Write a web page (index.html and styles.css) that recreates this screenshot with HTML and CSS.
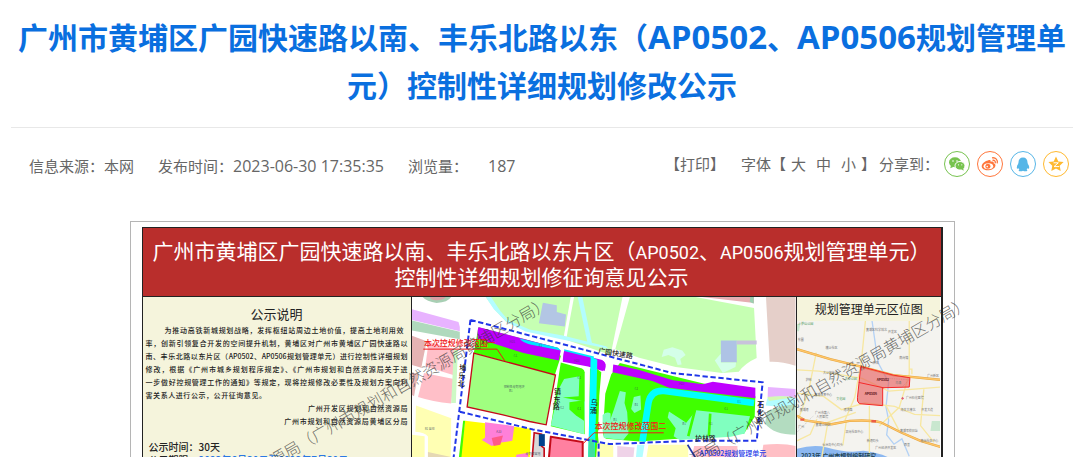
FILE: index.html
```html
<!DOCTYPE html>
<html lang="zh-CN">
<head>
<meta charset="utf-8">
<title>控制性详细规划修改公示</title>
<link rel="stylesheet" href="styles.css">
</head>
<body>
<main class="article">
  <h1 class="title">广州市黄埔区广园快速路以南、丰乐北路以东（<span class="title-code">AP0502</span>、<span class="title-code">AP0506</span>规划管理单元）控制性详细规划修改公示</h1>
  <div class="meta">
    <div class="meta-info">
      <span>信息来源：本网</span>
      <span>发布时间：<time class="num">2023-06-30 17:35:35</time></span>
      <span class="views"><span>浏览量：</span><span class="num">187</span></span>
    </div>
    <div class="tools">
      <button class="tool" type="button">【打印】</button>
      <div class="sizes">
        <span>字体【</span>
        <span class="size-list"><button class="tool" type="button">大</button><button class="tool" type="button">中</button><button class="tool" type="button">小</button></span>
        <span>】</span>
      </div>
      <div class="share">
        <span>分享到：</span>
        <div class="share-list">
          <a class="share-link wechat" href="#" aria-label="微信"><svg viewBox="1 1 24 24"><ellipse cx="11" cy="11.3" rx="6" ry="5"/><path d="M7 14l-.7 3.200 3.400-1.500z"/><ellipse class="halo" cx="16" cy="14.800" rx="5" ry="4.300"/><path d="M17 18l2.600 1.800-.4-3z"/><g class="dots"><circle cx="9" cy="10" r=".8"/><circle cx="13" cy="10" r=".8"/><circle cx="14.500" cy="13.800" r=".6"/><circle cx="17.800" cy="13.800" r=".6"/></g></svg></a>
          <a class="share-link weibo" href="#" aria-label="微博"><svg viewBox="1 1 24 24"><path d="M11 9.500c1.500-.9 3-.6 2.600 1.300 2.300-.8 3.600 0 3 1.500 1.700.6 2.200 1.800 1.700 3-.9 2.500-4.300 4-7.600 4-3.300 0-6-1.600-6-4 0-2.200 3-5.400 6.300-5.800z"/><ellipse class="dots" cx="11.400" cy="15.200" rx="4.800" ry="3"/><circle cx="10.900" cy="15.300" r="2.500"/><circle class="dots" cx="10.200" cy="15.600" r=".8"/><path class="wave" d="M15.500 9.300c2-.4 3.300 1 2.700 2.900M15 6.900c3.600-.7 6.200 2 5.200 5.500"/></svg></a>
          <a class="share-link qq" href="#" aria-label="QQ"><svg viewBox="1 1 24 24"><path d="M13 6.500c3 0 4.600 2 4.500 5 .2.600.4 1 .3 1.500 1.200 1.400 1.700 3.200 1.200 4.700-.4.300-.9-.1-1.300-.7-.2.700-.6 1.300-1.100 1.700 1 .5 1.200 1.300-.2 1.500-1.400.1-2.600 0-3.400-.5-.8.500-2 .6-3.400.5-1.400-.2-1.200-1-.2-1.500-.5-.4-.9-1-1.100-1.700-.4.600-.9 1-1.300.7-.5-1.500 0-3.300 1.200-4.700-.1-.5.100-.9.300-1.500-.1-3 1.500-5 4.500-5z"/></svg></a>
          <a class="share-link qzone" href="#" aria-label="QQ空间"><svg viewBox="1 1 24 24"><path d="M13 5.500l2.300 4.900 5.300.7-3.900 3.700 1 5.300-4.700-2.600-4.700 2.600 1-5.300-3.900-3.700 5.300-.7z"/><path class="zed" d="M10.500 11.800h4.800l-4.300 3.800h5.200"/></svg></a>
        </div>
      </div>
    </div>
  </div>

  <section class="poster">
    <div class="sheet">
      <h2 class="banner">广州市黄埔区广园快速路以南、丰乐北路以东片区（<span class="code">AP0502</span>、<span class="code">AP0506</span>规划管理单元）<br>控制性详细规划修征询意见公示</h2>
      <div class="columns">
        <div class="notice">
          <h3 class="notice-title">公示说明</h3>
          <div class="notice-text">
            <p class="first">为推动高铁新城规划战略，发挥枢纽站周边土地价值，提高土地利用效</p>
            <p>率，创新引领复合开发的空间提升机制，黄埔区对广州市黄埔区广园快速路以</p>
            <p>南、丰乐北路以东片区（AP0502、AP0506规划管理单元）进行控制性详细规划</p>
            <p>修改，根据《广州市城乡规划程序规定》、《广州市规划和自然资源局关于进</p>
            <p>一步做好控规管理工作的通知》等规定，现将控规修改必要性及规划方案向利</p>
            <p class="last">害关系人进行公示，公开征询意见。</p>
          </div>
          <div class="sign">
            <p class="sign-a">广州开发区规划和自然资源局</p>
            <p class="sign-b">广州市规划和自然资源局黄埔区分局</p>
          </div>
          <p class="period">公示时间：30天</p>
          <p class="period">公示期限：<span class="dates">2023年6月30日至2023年7月30日</span></p>
        </div>

        <svg class="plan" viewBox="6 21 1155 510" role="img" aria-label="规划图">
          <rect x="6" y="21" width="1155" height="510" fill="#fff"/>
          <!-- surrounding plots -->
          <path d="M38 21h86q-10 16-44 18-30-4-42-18z" fill="#a8cfb4"/><path d="M60 21h48q-10 10-28 10t-20-10z" fill="#d9a0a4"/>
          <path d="M228 21H484L462 146 360 126 290 96 256 60z" fill="#c6ffb3"/>
          <path d="M494 21H640L604 196 470 150z" fill="#c6ffb3"/>
          <path d="M662 21H860L1036 54 1044 205Q1010 220 990 246L940 250 800 232 690 204 618 178z" fill="#c6ffb3"/>
          <path d="M228 21h16l28 42 24 28 64 28 100 18 130 32 8 8-140-28-110-24-56-28-40-40z" fill="#b3fdff"/>
          <path d="M505 21h14l30 144-14-4z" fill="#b3fdff"/>
          <path d="M400 38l42 8v20l28 8-4 36-78-10z" fill="#b3c6e4"/>
          <path d="M880 21h156v18z" fill="#e5adb1"/><path d="M1025 21h10v20l-12-6z" fill="#9bcfb0"/>
          <path d="M1072 21h89V228q-44-14-78-12z" fill="#e5cfc9"/>
          <path d="M936 152h48v66h-48z" fill="#aec3e5"/><path d="M984 152h60v12h-60z" fill="#c8c3db"/>
          <path d="M936 192v26h46l-2 14-38 18-24-38z" fill="#d4ffe9"/>
          <path d="M764 180l26-8 30 10 10 14-16 12 4 16-12 2-8-22-20-8-20 6z" fill="#d4ffe9"/>
          <path d="M6 58l140 38q6 16 4 28L6 90z" fill="#e8b3ff"/><path d="M6 92l144 34v22L6 122z" fill="#b0d9bd"/>
          <path d="M6 138l44 16-16 80-28-8z" fill="#e5b3b3"/><path d="M56 156l78 22-4 78-84-26z" fill="#ffbfc8"/>
          <path d="M6 248l18 6-12 66-6-4z" fill="#e5b3b3"/><path d="M42 250l90 18-8 74q-56-6-100-20z" fill="#ffbfc8"/><path d="M132 180h12l-6 160h-14z" fill="#cdf9c4"/>
          <path d="M18 348l106 38-2 145H54v-90q-10-12-38-14z" fill="#ffffb3"/><path d="M6 436l38 4v91H6z" fill="#ffffb3"/><path d="M54 488l66 14v29H54z" fill="#e5d8b3"/>
          <path d="M1078 292l83 6v30l-84-6z" fill="#e8b3ff"/><path d="M1076 326q44-12 85 0v30l-90-8z" fill="#b3fdff"/><path d="M1076 322q40-4 85 0l-80 12z" fill="#d5f9b3"/>
          <path d="M1076 364q40-16 85-20v92q-66 0-92-34z" fill="#b3dcc0"/><path d="M1064 466q60-6 97 4v61h-107z" fill="#ffbfc5"/>
          <!-- railway belt and green land -->
          <path d="M206 112L444 174 454 200 436 256 192 190z" fill="#40ff00"/>
          <path d="M208 112l236 62 10 8-6 30-106-22-138-44q-2-24 2-34z" fill="#bf00ff"/>
          <path d="M330 146l116 28 8 8-92-18q-24-6-32-18z" fill="#00e5ff"/>
          <path d="M464 182l112 28q14 6 12 20l-8 14-44-14-76-14z" fill="#bf00ff"/>
          <path d="M464 178l90 22-6 28-10-10-72-26z" fill="#00e5ff"/><path d="M464 184l82 20-2 22-84-16z" fill="#bf00ff"/>
          <path d="M454 218l64 18q8 4 8 12V434l-102-24z" fill="#40ff00"/>
          <path d="M464 268l46-8-2 60-48 4 66 12-2 98-100-26 24-110z" fill="#80ffbf"/><path d="M480 338l44-6v62l-24-16-20-18z" fill="#40ff00"/>
          <path d="M542 236l22 2 12 10-6 70-4 120 8 80h-36z" fill="#40ff00"/>
          <path d="M544 200l20 10-6 240-4 81h-18z" fill="#00ffff"/><path d="M538 448h16l4 83h-22z" fill="#40dfa0"/>
          <path d="M192 190L438 256 410 406 360 396 280 376 172 352z" fill="#a0ff80" stroke="#c40b19" stroke-width="4"/>
          <path d="M606 254L632 220 1040 320 1038 382 1006 432 860 444 690 456 590 448q-12-6-8-36l6-100z" fill="#40ff00"/>
          <path d="M612 224l20 4 56 12 104 32 90 12 30-8 128 18v32L780 294l-50-20-120-26z" fill="#bf00ff"/><path d="M576 210q20 8 10 34l-20-8z" fill="#bf00ff"/>
          <path d="M700 456L718 340Q726 300 766 304L1036 340" fill="none" stroke="#00ffff" stroke-width="20"/>
          <path d="M632 304l18 4-4 32 8 28 4 64-16 20-58-6q-6-16 10-30l20-56z" fill="#80ffbf"/>
          <path d="M674 322l20-4 2 42-20 10-10-12z" fill="#80ffbf"/>
          <path d="M780 366l52 34 30-38 162 18-16 52-42 10-154 10-18-12 6-24-24-32z" fill="#80ffbf"/><path d="M858 362l-20 78M904 372l-4 68" fill="none" stroke="#40ff00" stroke-width="8"/>
          <path d="M580 376q14-12 24-4v74q-28-6-24-36z" fill="#80ffbf"/>
          <!-- southern plots -->
          <path d="M166 394l198 24-4 113H148z" fill="#ff0"/><path d="M166 394l-14 137h-8l16-137z" fill="#40ff00"/>
          <path d="M226 398l88 12-6 44-38 6-24 10-30-18 10-8z" fill="#ff80d9"/><path d="M246 446l34-8-8 28-20 4z" fill="#ff5b89"/><path d="M320 496l36-6v41h-40z" fill="#ff80d9"/>
          <path d="M374 430l22 4v36l8 6v55h-38z" fill="#d8d8d8" stroke="#c40b19" stroke-width="5"/><path d="M388 434h18v36h-18z" fill="#00408c"/>
          <path d="M424 442l96 16v73H416z" fill="#ff80a0" stroke="#c40b19" stroke-width="6"/>
          <path d="M564 460l48 8v63h-54z" fill="#ffffb3"/><path d="M624 470l52 4-6 57h-46z" fill="#efd3e8"/><path d="M684 466h22l-10 65h-18z" fill="#b3fdff"/><path d="M718 466h120v65H708z" fill="#ffffb3"/><path d="M856 470h130v61H840z" fill="#ffbfc8"/>
          <!-- unit boundary -->
          <path d="M182 90L570 192 790 250 1062 278 1044 454 850 454 600 464 370 420 148 366M182 90L128 531M568 462v69" fill="none" stroke="#2036e8" stroke-width="6" stroke-dasharray="16 8"/>
          <path d="M836 466l30 50" stroke="#2036a8" stroke-width="5"/>
          <g class="road">
            <text x="566" y="190" transform="rotate(9 566 190)">广园快速路</text><text x="858" y="456">护林路</text>
            <text x="148" y="240">埔</text><text x="146" y="264">乐</text><text x="144" y="288">北</text>
            <text x="434" y="314">镇</text><text x="432" y="336">东</text><text x="430" y="358">路</text>
            <text x="544" y="346">乌</text><text x="542" y="370">涌</text><text x="1046" y="352">石</text><text x="1044" y="376">化</text><text x="1042" y="400">路</text>
          </g>
          <g class="plot"><text x="282" y="294">控制性规划地块</text><text x="298" y="306">B1</text><text x="300" y="160">H21</text><text x="312" y="202">G1</text><text x="260" y="430">A33</text><text x="44" y="422">R2 居住</text><text x="388" y="172">E1</text><text x="494" y="216">H21</text><text x="504" y="268">G1</text><text x="452" y="358">G2</text><text x="504" y="362">G1</text><text x="676" y="302">G1</text><text x="810" y="286">H21</text><text x="612" y="394">B1</text><text x="676" y="348">B1</text><text x="820" y="408">B1</text><text x="900" y="406">G1</text><text x="946" y="360">G1</text><text x="986" y="340">E1</text><text x="348" y="496">规划保留地</text></g>
          <path d="M40 178h222l24 36M520 464l34-34h210" fill="none" stroke="#f01818" stroke-width="3"/>
          <text class="scope" x="42" y="168">本次控规修改范围一</text><text class="scope" x="556" y="420">本次控规修改范围二</text>
          <text class="unit" x="872" y="500">AP0502规划管理单元</text>
        </svg>

        <div class="location">
          <h3 class="location-title">规划管理单元区位图</h3>
          <svg class="inset" viewBox="22 95 432 420" role="img" aria-label="区位图">
            <rect x="22" y="95" width="432" height="420" fill="#f4f3ef"/>
            <path d="M22 104h10l-4 22h-6zM428 396h26v30h-30z" fill="#c9e7cf"/>
            <path d="M22 480q50-14 90-4 60 18 110 10 50 6 84 24v5H22z" fill="#8bb7f0"/>
            <path d="M248 95l18 125 32 60-8 74 8 40-6 44 22 28 24-16 22 52" fill="none" stroke="#b4d2f5" stroke-width="4"/>
            <g fill="none" stroke="#f7e7a1" stroke-width="4"><path d="M22 242l66 4 130 22 80 38 156-12M80 190l-24 120-30 80M22 312l80 10 54 40 70-20 90 10 60 24 78 4M228 95l-12 120-20 110-30 70M360 95v160l-30 100-60 56M240 350v165M170 400l-10 70M290 350l40 76M404 300l-10 110 40 50M22 456l40-20 20-46M95 515l20-115 84-30M368 255v-15h-8"/></g>
            <path d="M22 180l100 30 90 22 100 26 142 14M22 380l24 14 80 12 54-10q60-4 94 4l60 30 60 26 60 18" fill="none" stroke="#e5a53e" stroke-width="7"/>
            <path d="M22 180l100 30 90 22 100 26 142 14M22 380l24 14 80 12 54-10q60-4 94 4l60 30 60 26 60 18" fill="none" stroke="#ffc66a" stroke-width="4"/>
            <path d="M22 430l50-50M300 268l60 4-20 20" fill="none" stroke="#bbb" stroke-width="2" stroke-dasharray="4 3"/>
            <path d="M214 232l98 26 50 8-2 28-80 2v54l-70-6q-8-6-6-18z" fill="#e65a5a" fill-opacity=".62" stroke="#f52828" stroke-width="3"/><path d="M208 280l74 16" stroke="#f52828" stroke-width="3"/>
            <path d="M32 392h12M246 397h14" stroke="#ec5d46" stroke-width="7"/>
            <g class="place"><text x="230" y="124">黄埔区科学城北</text><text x="296" y="132">开发区</text><text x="108" y="178">横沙社区</text><text x="24" y="154">东圃</text><text x="330" y="208">南岗镇</text><text x="250" y="226">新城</text><text x="100" y="254">大沙地街道</text><text x="48" y="276">护林</text><text x="414" y="264">广州新区</text><text x="74" y="322">黄埔体育中心</text><text x="350" y="330">广州石化医院</text><text x="30" y="366">黄埔港</text><text x="76" y="376">广州市第八</text><text x="80" y="386">人民医院</text><text x="162" y="366">港湾路</text><text x="334" y="366">海关大楼北</text><text x="396" y="366">开发大道</text><text x="78" y="412">黄埔公园站</text><text x="168" y="432">双岗社区中心</text><text x="26" y="416">广州</text><text x="332" y="428">黄埔军校旧址</text><text x="98" y="470">长洲岛中心码头</text><text x="232" y="458">新港码头</text><text x="394" y="458">南岗社区中心</text><text x="258" y="482">广州经济开发区</text><text x="344" y="472">西基</text><text x="318" y="284">乌涌</text></g>
            <g class="park"><text x="26" y="108">火炉山公园</text><text x="166" y="274">大沙公园</text><text x="140" y="332">文化园</text></g>
            <path d="M336 328h8m-4-4v8" stroke="#e05b70" stroke-width="3"/>
            <text class="zone" x="262" y="276">AP0502</text><text class="zone" x="226" y="317">AP0506</text>
            <text class="date" x="34" y="508">2023年 广州市规划编制研究</text>
          </svg>
        </div>
      </div>
    </div>
    <svg class="watermark" viewBox="0 0 825 246" aria-hidden="true">
      <text transform="translate(116 261) rotate(-30)">然资源局（广州市规划和自然资源局黄埔区分局）</text>
      <text transform="translate(537 261) rotate(-30)">然资源局（广州市规划和自然资源局黄埔区分局）</text>
    </svg>
  </section>
</main>
</body>
</html>
```

FILE: styles.css
```css
* { box-sizing: border-box; }

body {
  margin: 0;
  height: 100vh;
  overflow: hidden;
  background: #fff;
  color: #666;
  font-family: "Noto Sans CJK SC", sans-serif;
  font-size: 15px;
}

h1, h2, h3, p { margin: 0; }

.article { padding: 12px 7px 0 11px; }

.title {
  padding-bottom: 19px;
  border-bottom: 1px solid #e8e8e8;
  color: #0a6fdf;
  font-size: 30px;
  line-height: 48px;
  font-weight: 700;
  text-align: center;
}

.title-code {
  font-family: "Open Sans", "Noto Sans", sans-serif;
  font-size: 33px;
  line-height: 1;
}

.meta {
  display: flex;
  justify-content: space-between;
  align-items: center;
  padding: 20px 4px 0 18px;
  line-height: 28px;
  white-space: nowrap;
}

.meta-info { display: flex; gap: 24px; padding-top: 4px; }
.views { display: flex; gap: 20px; }
.num { font-family: "Open Sans", "Noto Sans", sans-serif; font-size: 16px; }

.tools { display: flex; align-items: center; gap: 3px; }

.tool {
  padding: 0;
  border: 0;
  background: none;
  color: inherit;
  font: inherit;
  cursor: pointer;
}

.sizes { display: flex; gap: 5px; margin-left: 13px; }
.size-list { display: flex; gap: 10px; }
.share { display: flex; align-items: center; gap: 5px; }
.share-list { display: flex; gap: 7px; }

.share-link {
  display: block;
  width: 26px;
  height: 26px;
  border: 1px solid currentColor;
  border-radius: 50%;
}

.share-link svg { display: block; width: 100%; height: 100%; fill: currentColor; }
.wechat { color: #77c34f; }
.weibo { color: #ff763b; }
.qq { color: #56b6e7; }
.qzone { color: #ffb92f; }
.share-link .dots { fill: #fff; }
.share-link .halo { stroke: #fff; stroke-width: 1; }
.share-link .wave { fill: none; stroke: currentColor; stroke-width: 1.3; }
.share-link .zed { fill: none; stroke: #fff; stroke-width: 1; }

.poster {
  position: relative;
  max-width: 825px;
  margin: 41px auto 0;
  padding: 5px 11px;
  border: 1px solid #b5b5b5;
  color: #222;
}

.sheet { border: 1px solid #222; border-right-width: 2px; }

.banner {
  padding: 9px 0 7px;
  border-bottom: 1px solid #222;
  background: #b92e2c;
  color: #fff;
  font-size: 21px;
  line-height: 26px;
  font-weight: 400;
  text-align: center;
  white-space: nowrap;
}

.code { font-family: Roboto, "Liberation Sans", sans-serif; font-size: 18px; line-height: 1; }

.columns { display: grid; grid-template-columns: 271fr 385fr 145fr; }

.notice {
  padding: 7px 4px 0 3px;
  border-right: 1px solid #222;
  background: #f5f4dc;
}

.notice-title { font-size: 13px; line-height: 20px; font-weight: 400; text-align: center; }

.notice-text { font-size: 7px; line-height: 13px; font-weight: 500; }
.notice-text p { text-align: justify; text-align-last: justify; white-space: nowrap; }
.notice-text .first { padding: 0 4px 0 19px; }
.notice-text .last { width: 46%; }

.sign {
  display: flex;
  flex-direction: column;
  align-items: flex-end;
  font-size: 7px;
  line-height: 13px;
  font-weight: 500;
}

.sign p { text-align-last: justify; }
.sign-a { width: 38%; }
.sign-b { width: 47%; }
.notice .sign + .period { margin-top: 12px; }

.period { padding-left: 3px; font-size: 10px; line-height: 13px; font-weight: 500; }
.dates { color: #2b78e4; }

.plan, .inset { display: block; width: 100%; height: auto; }
.plan text { font-family: "Noto Sans CJK SC", sans-serif; }
.plan .road { font-size: 21px; font-weight: 500; fill: #222; }
.plan .plot { font-size: 9px; fill: #345; fill-opacity: .8; }
.plan .scope { font-size: 24px; font-weight: 500; fill: #f01818; }
.plan .unit { font-size: 21px; font-weight: 500; fill: #2036e8; }

.location { border-left: 1px solid #222; background: #f5f4dc; }

.location-title {
  font-size: 12px;
  line-height: 24px;
  font-weight: 400;
  text-align: center;
  white-space: nowrap;
}

.inset text { font-family: "Noto Sans CJK SC", sans-serif; }
.inset .place { font-size: 9px; fill: #777; }
.inset .park { font-size: 9px; fill: #3d9252; }
.inset .zone { font-size: 10px; font-weight: 700; fill: #511; }
.inset .date { font-size: 18px; font-weight: 700; fill: #245; }

.watermark {
  position: absolute;
  inset: 0 0 auto;
  width: 100%;
  overflow: visible;
  pointer-events: none;
}

.watermark text {
  font-family: "Noto Sans CJK SC", sans-serif;
  font-size: 16px;
  font-weight: 300;
  fill: #333;
  fill-opacity: .7;
}
```
